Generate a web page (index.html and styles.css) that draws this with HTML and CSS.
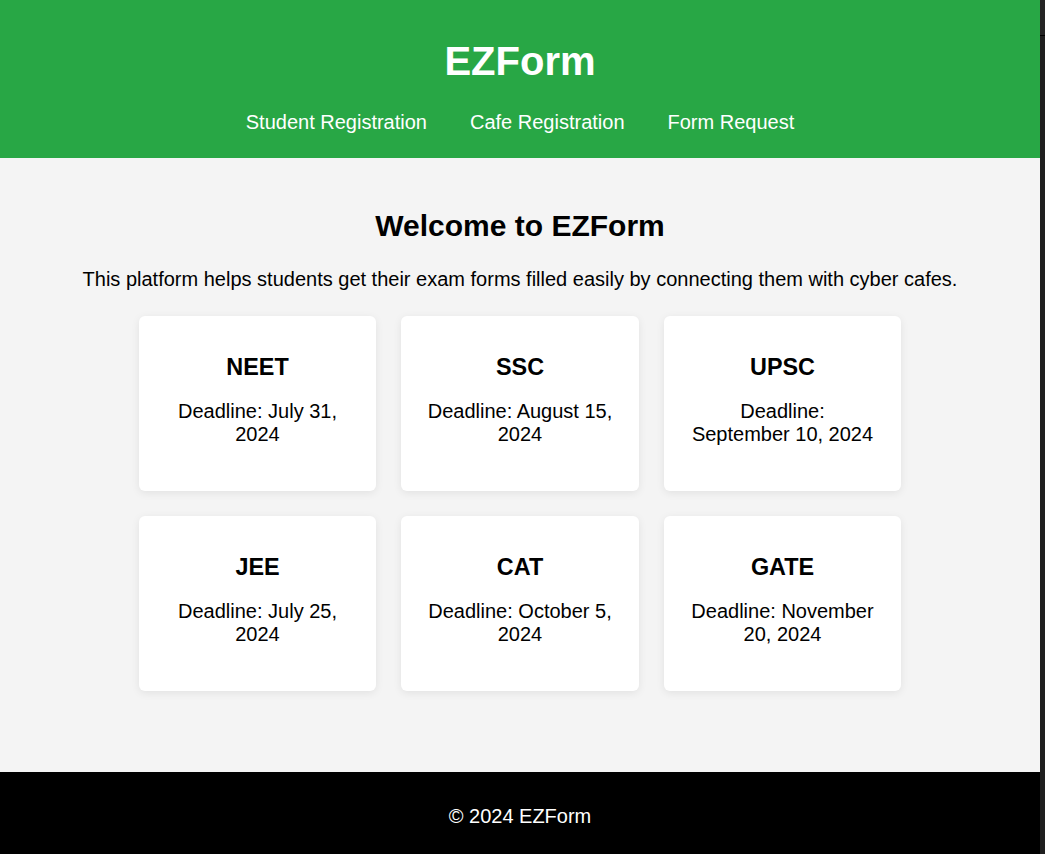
FILE: index.html
```html
<!DOCTYPE html>
<html lang="en">
<head>
<meta charset="utf-8">
<title>EZForm</title>
<link rel="stylesheet" href="styles.css">
</head>
<body>
<div class="page">
  <header class="site-header">
    <h1 class="brand">EZForm</h1>
    <nav class="nav">
      <a href="#">Student Registration</a>
      <a href="#">Cafe Registration</a>
      <a href="#">Form Request</a>
    </nav>
  </header>
  <main class="main">
    <h2 class="welcome">Welcome to EZForm</h2>
    <p class="intro">This platform helps students get their exam forms filled easily by connecting them with cyber cafes.</p>
    <section class="exams">
      <div class="card"><h3>NEET</h3><p>Deadline: July 31, 2024</p></div>
      <div class="card"><h3>SSC</h3><p>Deadline: August 15, 2024</p></div>
      <div class="card"><h3>UPSC</h3><p>Deadline: September 10, 2024</p></div>
      <div class="card"><h3>JEE</h3><p>Deadline: July 25, 2024</p></div>
      <div class="card"><h3>CAT</h3><p>Deadline: October 5, 2024</p></div>
      <div class="card"><h3>GATE</h3><p>Deadline: November 20, 2024</p></div>
    </section>
  </main>
  <footer class="site-footer">
    <p>&copy; 2024 EZForm</p>
  </footer>
</div>
<div class="scrollbar"><div class="thumb"></div></div>
</body>
</html>
```

FILE: styles.css
```css
html {
  overflow: hidden;
  height: 100%;
}

body {
  margin: 0;
  height: 100%;
  display: flex;
  font-family: "Liberation Sans", Arial, sans-serif;
  font-size: 20px;
  color: #000;
  background: #f4f4f4;
}

.page {
  flex: 1;
  min-width: 0;
  display: flex;
  flex-direction: column;
}

.scrollbar {
  width: 5px;
  flex: none;
  background: #1f1f1f;
  display: flex;
  flex-direction: column;
}

.scrollbar .thumb {
  height: 35px;
  background: #242424;
  border-bottom: 1px solid #000;
}

.site-header {
  background: #28a745;
  color: #fff;
  text-align: center;
  padding: 38px 0 24px;
  height: 158px;
  box-sizing: border-box;
}

.brand {
  margin: 0 0 27px;
  font-size: 40px;
  line-height: 46px;
  font-weight: bold;
}

.nav {
  display: flex;
  justify-content: center;
  gap: 43px;
  line-height: 23px;
}

.nav a {
  color: #fff;
  text-decoration: none;
  font-size: 20px;
}

.main {
  padding: 51px 0 81px;
  text-align: center;
  background: #f4f4f4;
}

.welcome {
  margin: 0 0 25px;
  font-size: 30px;
  line-height: 34px;
  font-weight: bold;
}

.intro {
  margin: 0 0 25px;
  line-height: 23px;
}

.exams {
  display: grid;
  grid-template-columns: repeat(3, 237.5px);
  gap: 25px;
  justify-content: center;
}

.card {
  background: #fff;
  border-radius: 6px;
  padding: 25px;
  box-shadow: 0 2px 8px rgba(0, 0, 0, 0.08);
  height: 175px;
  box-sizing: border-box;
}

.card h3 {
  margin: 13px 0 19px;
  font-size: 23.4px;
  line-height: 27px;
  font-weight: bold;
}

.card p {
  margin: 0;
  line-height: 23px;
}

.site-footer {
  flex: 1;
  background: #000;
  color: #fff;
  text-align: center;
  padding-top: 33px;
}

.site-footer p {
  margin: 0;
  line-height: 23px;
}
```
